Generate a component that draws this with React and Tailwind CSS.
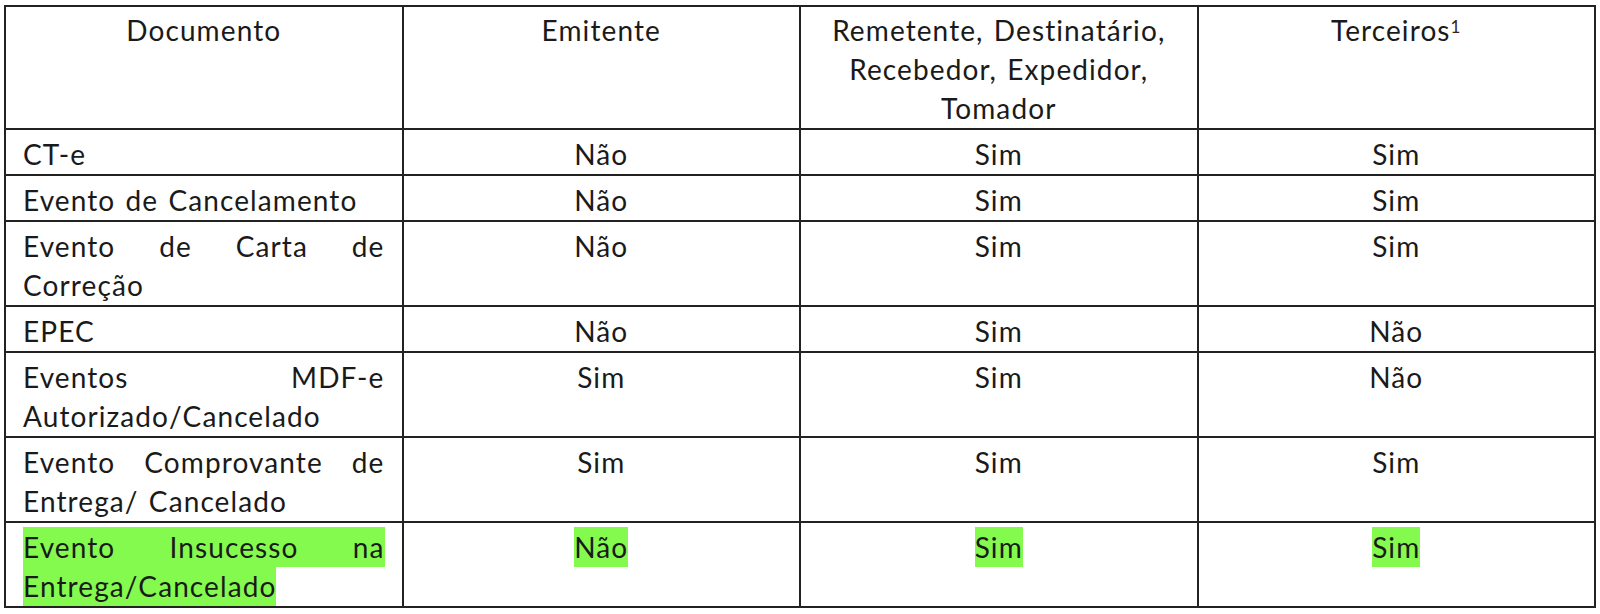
import React from "react";

const rows = [
  { doc: "CT-e", e: "Não", r: "Sim", t: "Sim" },
  { doc: "Evento de Cancelamento", e: "Não", r: "Sim", t: "Sim" },
  { doc: "Evento de Carta de Correção", e: "Não", r: "Sim", t: "Sim" },
  { doc: "EPEC", e: "Não", r: "Sim", t: "Não" },
  { doc: "Eventos MDF-e Autorizado/Cancelado", e: "Sim", r: "Sim", t: "Não" },
  { doc: "Evento Comprovante de Entrega/ Cancelado", e: "Sim", r: "Sim", t: "Sim" },
  { doc: "Evento Insucesso na Entrega/Cancelado", e: "Não", r: "Sim", t: "Sim", hl: true },
];

const cell = "border-2 border-[#222] align-top pb-0 px-[17px]";

// highlighter marker, padded so the green fills the whole line box
const Mark = ({ on, children }) =>
  on ? <span className="bg-[#84fa4e] box-decoration-clone py-[3px]">{children}</span> : children;

const App = () => {
  return (
    <div
      className="bg-white min-h-screen pl-[4px] pt-[5px] text-[#1a1a1a] text-[28px] leading-[39px] font-normal tracking-[1.1px] [word-spacing:2px]"
      style={{ fontFamily: 'Lato, "Noto Sans", sans-serif' }}
    >
      <table className="table-fixed border-collapse w-[1592px]">
        <thead>
          <tr>
            <th className={`${cell} pt-[4px] font-normal text-center`}>Documento</th>
            <th className={`${cell} pt-[4px] font-normal text-center`}>Emitente</th>
            <th className={`${cell} pt-[4px] font-normal text-center`}>
              Remetente, Destinatário, Recebedor, Expedidor, Tomador
            </th>
            <th className={`${cell} pt-[4px] font-normal text-center`}>
              Terceiros<sup className="text-[17px] text-[#3a2218]">1</sup>
            </th>
          </tr>
        </thead>
        <tbody>
          {rows.map((row) => (
            <tr key={row.doc}>
              <td className={`${cell} pt-[5px] text-justify`}>
                <Mark on={row.hl}>{row.doc}</Mark>
              </td>
              <td className={`${cell} pt-[5px] text-center`}>
                <Mark on={row.hl}>{row.e}</Mark>
              </td>
              <td className={`${cell} pt-[5px] text-center`}>
                <Mark on={row.hl}>{row.r}</Mark>
              </td>
              <td className={`${cell} pt-[5px] text-center`}>
                <Mark on={row.hl}>{row.t}</Mark>
              </td>
            </tr>
          ))}
        </tbody>
      </table>
    </div>
  );
};

export default App;
